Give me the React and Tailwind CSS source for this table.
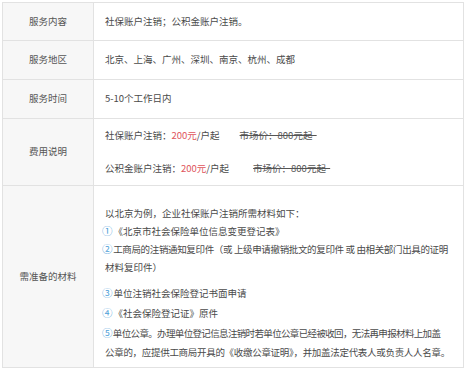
const font = { fontFamily: '"Noto Sans CJK SC", "Noto Sans", sans-serif' };

const Num = ({ children }) => (
  <span className="text-[#4ea0d8] text-[10.5px] mr-[1px]">{children}</span>
);

const Row = ({ label, className, children }) => (
  <div className={`flex border-t border-[#e2e2e2] ${className || ''}`}>
    <div className="w-[91px] shrink-0 bg-[#f7f7f7] border-r border-[#e2e2e2] flex items-center justify-center text-[#555]">
      {label}
    </div>
    <div className="flex-1 min-w-0 bg-white pl-[11px] text-[#4a4a4a] whitespace-nowrap">{children}</div>
  </div>
);

export default function App() {
  return (
    <div className="w-[465px] h-[369px] bg-white pt-[2px] pl-[2px] overflow-hidden" style={font}>
      <div className="w-[462px] border-l border-r border-b border-[#e2e2e2] text-[9.5px] leading-none">
        <Row label="服务内容" className="h-[38px]">
          <div className="h-full flex items-center">社保账户注销；公积金账户注销。</div>
        </Row>
        <Row label="服务地区" className="h-[39px]">
          <div className="h-full flex items-center">北京、上海、广州、深圳、南京、杭州、成都</div>
        </Row>
        <Row label="服务时间" className="h-[39px]">
          <div className="h-full flex items-center">5-10个工作日内</div>
        </Row>
        <Row label="费用说明" className="h-[67px]">
          <div className="h-full flex flex-col justify-center gap-[23px]">
            <div className="flex items-center">
              <span>社保账户注销：<span className="text-[#e0545c]">200元</span>/户起</span>
              <span className="ml-[20px] line-through text-[#555]">市场价：800元起&nbsp;&nbsp;</span>
            </div>
            <div className="flex items-center">
              <span>公积金账户注销：<span className="text-[#e0545c]">200元</span>/户起</span>
              <span className="ml-[24px] line-through text-[#555]">市场价：800元起&nbsp;&nbsp;</span>
            </div>
          </div>
        </Row>
        <Row label="需准备的材料" className="h-[182px]">
          <div className="pt-[18px] pb-[10px]">
            <div className="leading-[18px]">
              <div>以北京为例，企业社保账户注销所需材料如下：</div>
              <div className="-ml-[3px]"><Num>①</Num>《北京市社会保险单位信息变更登记表》</div>
              <div className="-ml-[3px] tracking-[-0.35px]"><Num>②</Num>工商局的注销通知复印件（或 上级申请撤销批文的复印件 或 由相关部门出具的证明</div>
              <div>材料复印件）</div>
            </div>
            <div className="leading-[19px] mt-[7px]">
              <div className="-ml-[3px]"><Num>③</Num>单位注销社会保险登记书面申请</div>
              <div className="-ml-[3px]"><Num>④</Num>《社会保险登记证》原件</div>
              <div className="-ml-[3px] tracking-[-0.65px]"><Num>⑤</Num>单位公章。办理单位登记信息注销时若单位公章已经被收回，无法再申报材料上加盖</div>
              <div className="tracking-[-0.3px]">公章的，应提供工商局开具的《收缴公章证明》，并加盖法定代表人或负责人人名章。</div>
            </div>
          </div>
        </Row>
      </div>
    </div>
  );
}
